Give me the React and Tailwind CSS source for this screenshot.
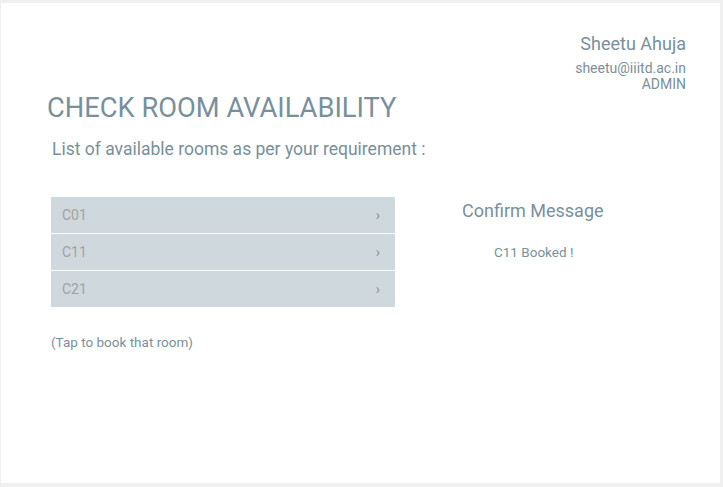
const rooms = ['C01', 'C11', 'C21'];

export default function App() {
    return (
        <div className="min-h-[487px] w-[723px] bg-[#f0f0f0] pt-[3px] pl-[1px] pr-[3px] pb-[4px]" style={{ fontFamily: 'Roboto, "Liberation Sans", sans-serif' }}>
            <div className="h-[480px] bg-white text-[#78909c]">
                {/* user info */}
                <div className="flex flex-col items-end pr-[34px] pt-[29px]">
                    <div className="text-[18px] leading-[24px]">Sheetu Ahuja</div>
                    <div className="mt-[4px] text-[14px] leading-[16px]">sheetu@iiitd.ac.in</div>
                    <div className="text-[14px] leading-[16px]">ADMIN</div>
                </div>

                <div className="pl-[46px]">
                    <h1 className="text-[27.3px] leading-[32px] font-normal">CHECK ROOM AVAILABILITY</h1>
                    <p className="mt-[15px] ml-[5px] text-[17.5px] leading-[20px]">List of available rooms as per your requirement :</p>
                </div>

                <div className="mt-[38px] flex">
                    <div className="ml-[50px] w-[344px]">
                        <div className="flex flex-col gap-[1px]">
                            {rooms.map((r) => (
                                <div key={r} className="flex h-[36px] items-center justify-between bg-[#cfd8dc] pl-[11px] pr-[15px] text-[14px] text-[#a2a2a2] cursor-pointer">
                                    <span>{r}</span>
                                    <span className="text-[14px] text-[#8f8f8f]">›</span>
                                </div>
                            ))}
                        </div>
                        <div className="mt-[27px] text-[13.5px] leading-[16px]">(Tap to book that room)</div>
                    </div>

                    <div className="ml-[67px] pt-[2px]">
                        <div className="text-[18px] leading-[24px]">Confirm Message</div>
                        <div className="mt-[21px] pl-[32px] text-[13.5px] leading-[16px]">C11 Booked !</div>
                    </div>
                </div>
            </div>
        </div>
    );
}
